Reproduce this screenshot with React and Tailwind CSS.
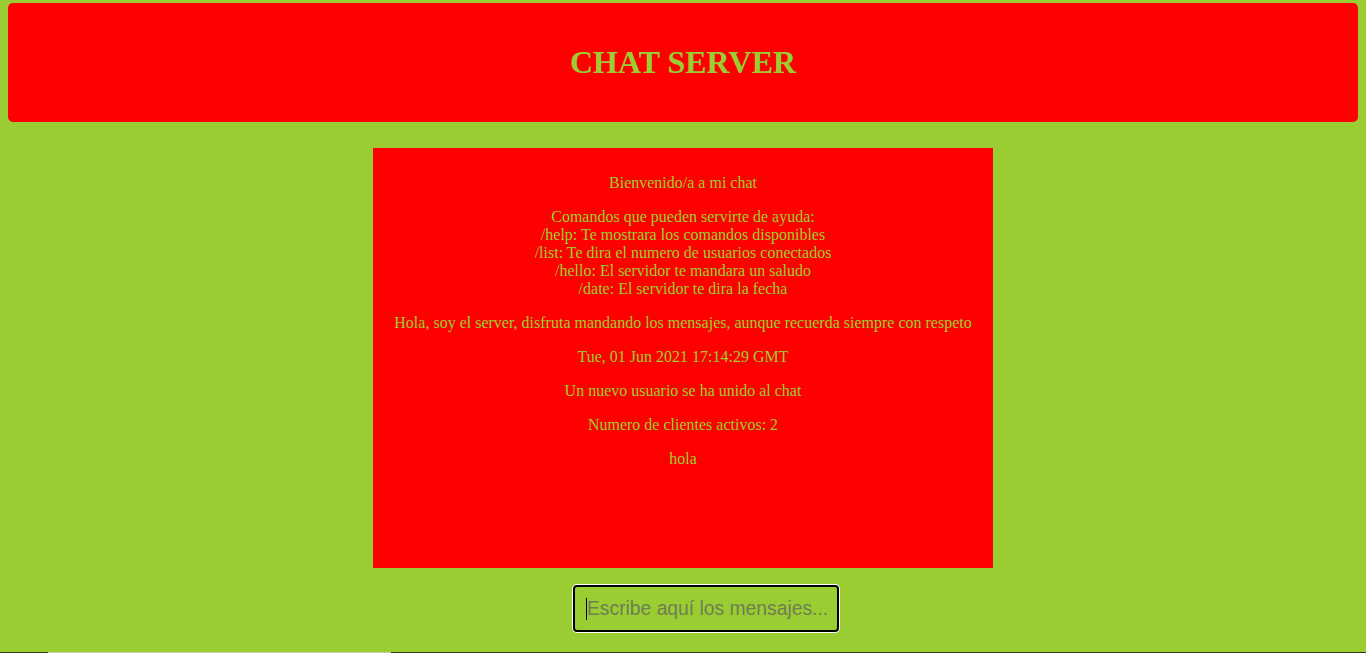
export default function App() {
  const serif = { fontFamily: '"Liberation Serif", "Times New Roman", serif' };
  return (
    <div className="min-h-[653px] w-full bg-[#9acd32] flex flex-col" style={serif}>
      <div className="mx-[8px] mt-[3px] h-[119px] rounded-[5px] bg-[#ff0000] flex items-center justify-center pb-[2px]">
        <h1 className="text-[32px] font-bold text-[#9acd32] leading-none">CHAT SERVER</h1>
      </div>
      <div className="mt-[26px] flex justify-center">
        <div className="w-[620px] h-[420px] bg-[#ff0000] p-[10px] text-center text-[16px] text-[#9acd32] leading-[18px]">
          <p className="my-[16px]">Bienvenido/a a mi chat</p>
          <p className="my-[16px]">
            Comandos que pueden servirte de ayuda:<br />
            /help: Te mostrara los comandos disponibles<br />
            /list: Te dira el numero de usuarios conectados<br />
            /hello: El servidor te mandara un saludo<br />
            /date: El servidor te dira la fecha
          </p>
          <p className="my-[16px]">Hola, soy el server, disfruta mandando los mensajes, aunque recuerda siempre con respeto</p>
          <p className="my-[16px]">Tue, 01 Jun 2021 17:14:29 GMT</p>
          <p className="my-[16px]">Un nuevo usuario se ha unido al chat</p>
          <p className="my-[16px]">Numero de clientes activos: 2</p>
          <p className="my-[16px]">hola</p>
        </div>
      </div>
      <div className="mt-[17px] flex justify-center pl-[46px]">
        <div className="relative">
          <input
            type="text"
            placeholder="Escribe aquí los mensajes..."
            className="w-[266px] h-[47px] rounded-[4px] border-2 border-black bg-[#9acd32] pl-[12px] pr-[8px] text-[19.3px] text-black outline-none ring-1 ring-white placeholder:text-[#6e7d55]"
            style={{ fontFamily: '"Liberation Sans", Arial, sans-serif' }}
          />
          <span className="absolute left-[13px] top-[13px] h-[22px] w-[1px] bg-black" />
        </div>
      </div>
      <div className="mt-[20px] h-[1px] w-full bg-[#2b3a1c] flex">
        <div className="ml-[48px] w-[343px] h-[1px] bg-[#c5d3b0]" />
      </div>
    </div>
  );
}
